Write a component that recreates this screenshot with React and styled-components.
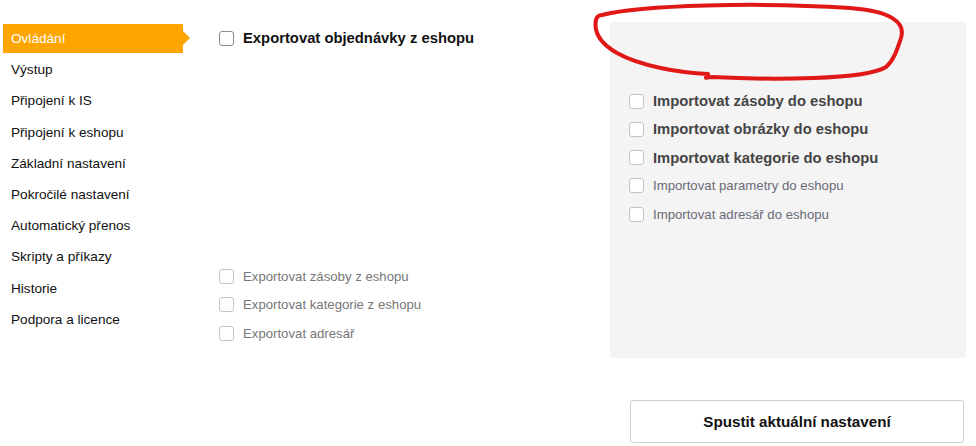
import React from 'react';
import styled, { createGlobalStyle } from 'styled-components';

const GlobalStyle = createGlobalStyle`
	html, body {
		margin: 0;
		padding: 0;
		background: #fff;
		font-family: "Liberation Sans", Arial, sans-serif;
	}
`;

const Page = styled.div`
	position: relative;
	display: flex;
	width: 976px;
	height: 446px;
	overflow: hidden;
`;

const Sidebar = styled.ul`
	list-style: none;
	margin: 0;
	padding: 24px 0 0 3px;
	width: 187px;
	flex-shrink: 0;
`;

const MenuItem = styled.li`
	position: relative;
	display: flex;
	align-items: center;
	height: 29px;
	margin-bottom: 2.2px;
	width: 180px;
	padding-left: 8px;
	box-sizing: border-box;
	font-size: 13.6px;
	color: ${p => (p.$active ? '#fff' : '#111')};
	background: ${p => (p.$active ? '#ffa500' : 'transparent')};
	&::after {
		content: '';
		display: ${p => (p.$active ? 'block' : 'none')};
		position: absolute;
		right: -7px;
		top: 7px;
		border-left: 7px solid #ffa500;
		border-top: 7px solid transparent;
		border-bottom: 7px solid transparent;
	}
`;

const Middle = styled.div`
	display: flex;
	flex-direction: column;
	width: 391px;
	margin-left: 29px;
	padding-top: 31px;
`;

const ExportGroup = styled.div`
	display: flex;
	flex-direction: column;
	gap: 14.5px;
	margin-top: 224px;
`;

const RightColumn = styled.div`
	display: flex;
	flex-direction: column;
	width: 356px;
	padding-top: 22px;
`;

const Panel = styled.div`
	height: 336px;
	background: #f4f4f4;
	padding: 72px 0 0 19px;
	box-sizing: border-box;
	display: flex;
	flex-direction: column;
	gap: 14.3px;
`;

const Row = styled.label`
	display: flex;
	align-items: center;
	height: 14px;
	gap: 9px;
	white-space: nowrap;
	font-size: ${p => (p.$bold ? '14.8px' : '13.2px')};
	font-weight: ${p => (p.$bold ? 700 : 400)};
	color: ${p => p.$color || '#777'};
`;

const Box = styled.span`
	width: 13px;
	height: 13px;
	flex-shrink: 0;
	border: 1px solid ${p => p.$border || '#c4c4c4'};
	border-radius: 3px;
	background: #fff;
`;

const RunButton = styled.button`
	margin: 42px 0 0 20px;
	width: 334px;
	height: 43px;
	background: #fff;
	border: 1px solid #cfcfcf;
	border-radius: 3px;
	font-family: "Liberation Sans", Arial, sans-serif;
	font-size: 15.2px;
	font-weight: 700;
	color: #111;
`;

const Scribble = styled.svg`
	position: absolute;
	left: 0;
	top: 0;
	pointer-events: none;
`;

const menu = [
	'Ovládání',
	'Výstup',
	'Připojení k IS',
	'Připojení k eshopu',
	'Základní nastavení',
	'Pokročilé nastavení',
	'Automatický přenos',
	'Skripty a příkazy',
	'Historie',
	'Podpora a licence',
];

const exports = ['Exportovat zásoby z eshopu', 'Exportovat kategorie z eshopu', 'Exportovat adresář'];

const imports = [
	{ text: 'Importovat zásoby do eshopu', bold: true },
	{ text: 'Importovat obrázky do eshopu', bold: true },
	{ text: 'Importovat kategorie do eshopu', bold: true },
	{ text: 'Importovat parametry do eshopu' },
	{ text: 'Importovat adresář do eshopu' },
];

const Check = ({ text, bold, color, border }) => (
	<Row $bold={bold} $color={color}>
		<Box $border={border} />
		{text}
	</Row>
);

export default function App() {
	return (
		<Page>
			<GlobalStyle />
			<Sidebar>
				{menu.map((item, i) => (
					<MenuItem key={item} $active={i === 0}>{item}</MenuItem>
				))}
			</Sidebar>
			<Middle>
				<Check text="Exportovat objednávky z eshopu" bold color="#111" border="#8a8a8a" />
				<ExportGroup>
					{exports.map(t => <Check key={t} text={t} />)}
				</ExportGroup>
			</Middle>
			<RightColumn>
				<Panel>
					{imports.map(item => (
						<Check
							key={item.text}
							text={item.text}
							bold={item.bold}
							color={item.bold ? '#444' : '#6a6a78'}
						/>
					))}
				</Panel>
				<RunButton>Spustit aktuální nastavení</RunButton>
			</RightColumn>
			<Scribble width="976" height="446">
				<path
					d="M 602 15 C 640 5, 760 2, 850 8 C 890 11, 906 22, 901 38 C 897 50, 894 60, 886 67 C 866 80, 770 80, 712 77 C 706 77, 704 80, 708 74 C 680 73, 640 66, 617 53 C 598 42, 594 30, 596 20 C 597 16, 600 15, 602 15 Z"
					fill="none"
					stroke="#e01818"
					strokeWidth="4"
					strokeLinecap="round"
					strokeLinejoin="round"
				/>
			</Scribble>
		</Page>
	);
}
